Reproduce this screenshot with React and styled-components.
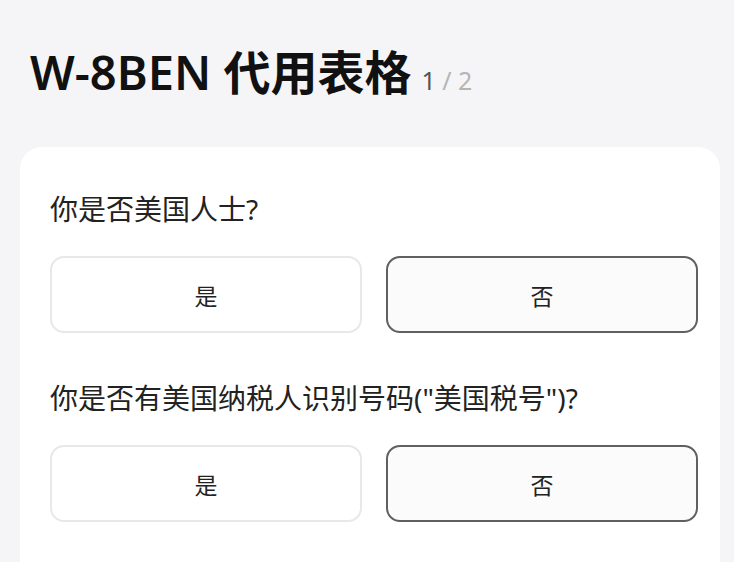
import React, { useState } from 'react';
import styled, { createGlobalStyle } from 'styled-components';

const GlobalStyle = createGlobalStyle`
  html, body {
    margin: 0;
    padding: 0;
    background: #f5f5f7;
    font-family: "Noto Sans", "Noto Sans CJK SC", sans-serif;
    color: #1a1a1a;
  }
`;

const Page = styled.div`
  width: 734px;
  height: 562px;
  overflow: hidden;
  box-sizing: border-box;
  padding: 44px 14px 0 20px;
`;

const Header = styled.div`
  display: flex;
  align-items: baseline;
  gap: 10px;
  padding-left: 10px;
  margin-bottom: 47px;
`;

const Title = styled.h1`
  margin: 0;
  font-size: 47px;
  line-height: 56px;
  font-weight: 600;
  color: #111;
`;

const Step = styled.span`
  font-size: 25px;
  color: #555;
  span {
    color: #b5b5b5;
  }
`;

const Card = styled.div`
  background: #fff;
  border-radius: 22px;
  padding: 43px 22px 40px 30px;
  display: flex;
  flex-direction: column;
`;

const Question = styled.div`
  font-size: 28px;
  line-height: 38px;
  color: #222;
  margin-bottom: 28px;
`;

const Options = styled.div`
  display: grid;
  grid-template-columns: 1fr 1fr;
  gap: 24px;
  margin-bottom: 46px;
`;

const Option = styled.button`
  height: 77px;
  border-radius: 14px;
  font-family: inherit;
  font-size: 23px;
  color: #222;
  cursor: pointer;
  background: ${({ $active }) => ($active ? '#fbfbfb' : '#fff')};
  border: ${({ $active }) => ($active ? '2px solid #606060' : '2px solid #e8e8e8')};
`;

const questions = [
  '你是否美国人士?',
  '你是否有美国纳税人识别号码("美国税号")?',
];

export default function App() {
  const [answers, setAnswers] = useState([false, false]);
  return (
    <>
      <GlobalStyle />
      <Page>
        <Header>
          <Title>W-8BEN 代用表格</Title>
          <Step>1 <span>/ 2</span></Step>
        </Header>
        <Card>
          {questions.map((q, i) => (
            <div key={i}>
              <Question>{q}</Question>
              <Options>
                <Option $active={answers[i]} onClick={() => setAnswers(a => a.map((v, j) => (j === i ? true : v)))}>是</Option>
                <Option $active={!answers[i]} onClick={() => setAnswers(a => a.map((v, j) => (j === i ? false : v)))}>否</Option>
              </Options>
            </div>
          ))}
        </Card>
      </Page>
    </>
  );
}
